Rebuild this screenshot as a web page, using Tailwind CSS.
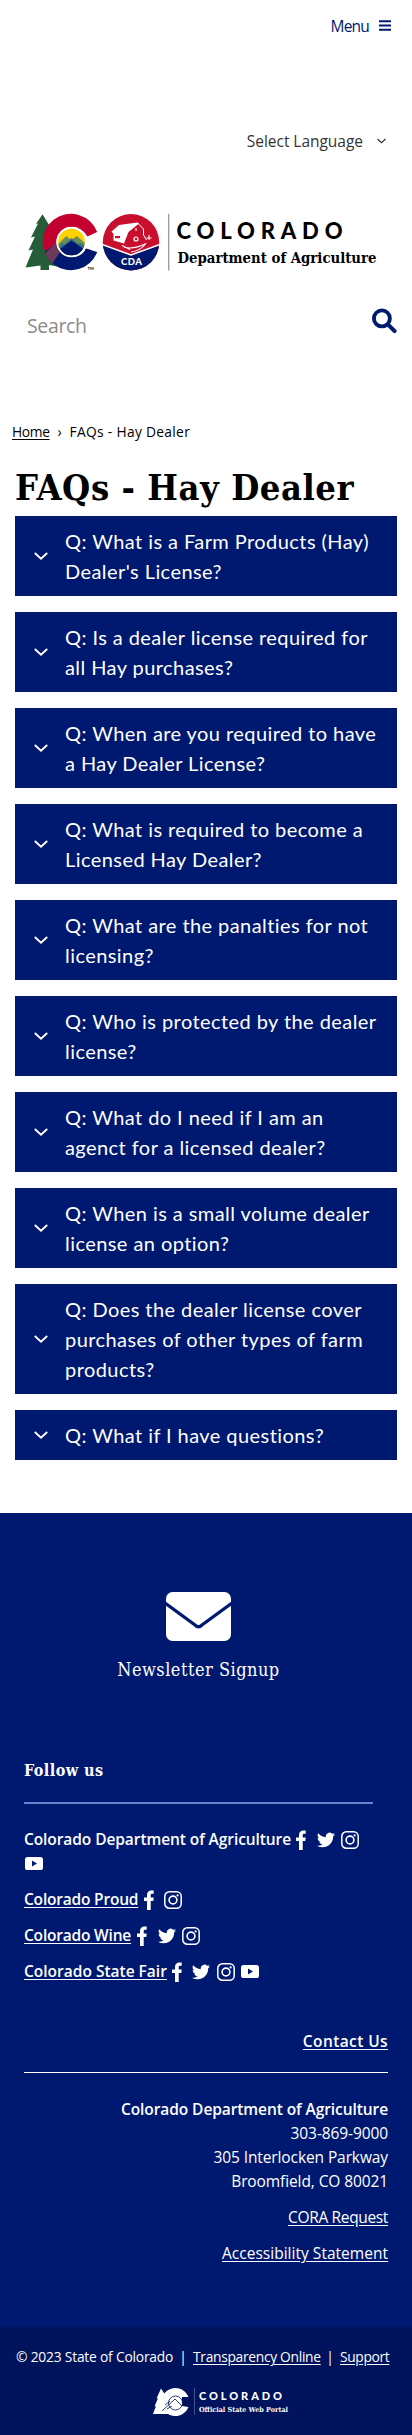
<!DOCTYPE html>
<html lang="en">
<head>
<meta charset="utf-8">
<title>FAQs - Hay Dealer</title>
<script src="https://cdn.jsdelivr.net/npm/@tailwindcss/browser@4"></script>
</head>
<body class="w-[412px] h-[2435px] bg-white text-black font-['Open_Sans',sans-serif] text-[15.5px] leading-6 overflow-x-hidden">

<svg class="hidden">
  <symbol id="chev" viewBox="0 0 14 8"><path d="M.8 1 7 6.6 13.2 1" fill="none" stroke="currentColor" stroke-width="1.9"/></symbol>
  <symbol id="fb" viewBox="0 0 18 20"><path d="M7 20v-9H4V7.400h3V5c0-3 1.800-4.600 4.400-4.600h2.300v3.400h-1.500c-1.200 0-1.500.6-1.500 1.500v2.100h3l-.4 3.600h-2.600v9z" fill="currentColor"/></symbol>
  <symbol id="tw" viewBox="0 0 24 24"><path fill="currentColor" d="M23.950 4.570a10 10 0 0 1-2.820.77 4.960 4.960 0 0 0 2.160-2.720c-.95.56-2 .96-3.120 1.190a4.920 4.920 0 0 0-8.380 4.480C7.690 8.090 4.070 6.130 1.640 3.160a4.920 4.920 0 0 0 1.520 6.570 4.900 4.900 0 0 1-2.230-.61v.06a4.920 4.920 0 0 0 3.950 4.830 4.900 4.900 0 0 1-2.210.08 4.940 4.940 0 0 0 4.600 3.420A9.870 9.870 0 0 1 0 19.540a13.990 13.990 0 0 0 7.550 2.210c9.050 0 14-7.500 14-13.980 0-.21 0-.42-.02-.63a9.940 9.940 0 0 0 2.420-2.570z"/></symbol>
  <symbol id="ig" viewBox="0 0 18 18"><rect x=".8" y=".8" width="16.400" height="16.400" rx="4.500" fill="none" stroke="currentColor" stroke-width="1.500"/><circle cx="9" cy="9" r="3.900" fill="none" stroke="currentColor" stroke-width="1.600"/><circle cx="13.600" cy="4.400" r="1.100" fill="currentColor"/></symbol>
  <symbol id="yt" viewBox="0 0 18 13"><rect width="18" height="13" rx="2.600" fill="currentColor"/><path d="M7 3.500v6l5-3z" fill="#001970"/></symbol>
</svg>

<header class="h-[400px]">
  <div class="flex items-center justify-end h-[51px] pr-[21px] gap-[10px] text-[#001970]">
    <span class="text-[15.500px] tracking-[-0.800px]">Menu</span>
    <svg class="w-3 h-[11px]" viewBox="0 0 12 11"><path d="M0 1.200h12M0 5.500h12M0 9.800h12" stroke="currentColor" stroke-width="1.900"/></svg>
  </div>
  <div class="flex items-center justify-end h-6 mt-[78px] pr-[26px] gap-[14px] text-[#333]">
    <span class="tracking-[-0.030px]">Select Language</span>
    <svg class="w-[9px] h-[6px]"><use href="#chev"/></svg>
  </div>

  <svg class="block ml-6 mt-[59px] w-[356px] h-[62px]" viewBox="24 212 356 62">
    <defs>
      <clipPath id="c"><path d="M97.200 232A28.200 28.200 0 1 0 97.200 252L86 248.500Q82 257 71.500 257A15 15 0 0 1 71.500 227Q82 227 87.500 236.500Z"/></clipPath>
      <clipPath id="disc"><circle cx="71.500" cy="242" r="13.300"/></clipPath>
      <clipPath id="cda"><circle cx="131" cy="242.300" r="28.200"/></clipPath>
    </defs>
    <path d="M42.500 214.300 51.500 229 47 230 54 243 50 244 60 267 49 265V270H40.500V265.500L25.500 267.500 33 249.500 28.500 250.500 35 236.500 31 237.500 38 223.500 36 224Z" fill="#245d38"/>
    <g clip-path="url(#c)">
      <path d="M40 210h62v40H40z" fill="#c3002f"/>
      <path d="M42 254 55 244 64 252 76 255 86 248.500 102 240V275H42z" fill="#001970"/>
      <path d="M42 256 55.500 243 60 252 52 264z" fill="#6d3a5d"/>
    </g>
    <circle cx="71.500" cy="242" r="15.200" fill="#fff"/>
    <g clip-path="url(#disc)">
      <path d="M56 227h32v30H56z" fill="#ffd100"/>
      <path d="M56 246 66.500 236 71 240 77 236 88 246V258H56z" fill="#6c8f58"/>
      <path d="M56 249 62 243 65 244 71.500 238 78 244 81 243 88 249V258H56z" fill="#3c6e80"/>
      <path d="M56 252 71.500 240.500 88 252V258H56z" fill="#001970"/>
    </g>
    <text x="87.500" y="270" font-family="Lato" font-size="4" font-weight="700">TM</text>
    <g clip-path="url(#cda)">
      <path d="M102 213h58v58h-58z" fill="#c8102e"/>
      <path d="M102 245 131 255.500 160 245V272H102z" fill="#001970"/>
      <path d="M102 244.500 131 255 160 244.500" fill="none" stroke="#fff" stroke-width="1.600"/>
    </g>
    <path d="M111.500 231.500 119 225 137.500 222.500 139 223.500 128.500 232 124 243.500 113.500 240.500V234Z" fill="#fff"/>
    <path d="M137.500 223 143.500 229V235L146.500 240M149 235v5M146.500 238h5M124.500 234 128 230" fill="none" stroke="#fff" stroke-width="1"/>
    <path d="M115 236h5v2.200h-5z" fill="#c8102e"/>
    <circle cx="136" cy="239" r="2" fill="none" stroke="#fff" stroke-width="1.200"/>
    <path d="M136 228v3M124 247Q133 250 146 243.500Q140 251 131 252M122 245.500 130 249.500" fill="none" stroke="#fff" stroke-width="1.100"/>
    <text x="121" y="264.500" font-family="Lato" font-size="9.500" font-weight="900" fill="#fff" textLength="21">CDA</text>
    <path d="M168.800 214v56.500" stroke="#777" stroke-width="1"/>
    <text x="176.500" y="238.500" font-family="Lato" font-size="22" font-weight="900" textLength="166">COLORADO</text>
    <text x="177.500" y="262.500" font-family="DejaVu Serif" style="font-stretch:75%" font-size="14.500" font-weight="700" textLength="199" lengthAdjust="spacingAndGlyphs">Department of Agriculture</text>
  </svg>

  <div class="flex justify-between mt-[34px] pl-[27px] pr-[15px]">
    <span class="mt-[3px] text-[19.500px] leading-[30px] text-[#8c8c8c] tracking-[-0.350px]">Search</span>
    <svg class="w-[25px] h-[26px]" viewBox="0 0 26 26"><circle cx="10.300" cy="10.300" r="8.300" fill="none" stroke="#001970" stroke-width="4"/><path d="M16.500 16.500 23.500 23.500" stroke="#001970" stroke-width="4.200" stroke-linecap="round"/></svg>
  </div>
</header>

<nav class="flex h-6 mt-[20px] pl-3 text-[13.800px]">
  <a class="underline underline-offset-2 tracking-[-0.350px]">Home</a><span class="w-[20px] text-center">›</span><span class="tracking-[0.300px]">FAQs - Hay Dealer</span>
</nav>

<main class="px-[15px]">
  <h1 class="mt-[21px] h-[51.400px] leading-[44px] font-bold text-[36px] tracking-[0.550px] whitespace-nowrap font-['DejaVu_Serif',serif] [font-stretch:75%]">FAQs - Hay Dealer</h1>
  <div id="faq" class="flex flex-col gap-4"></div>
</main>

<footer class="mt-[52.600px] bg-[#001970] text-white h-[922px] flex flex-col">
  <div class="flex flex-col items-center pr-[15px] pt-[79px]">
    <svg class="w-[65px] h-[49px]" viewBox="0 0 65 49"><rect width="65" height="49" rx="6.500" fill="#fff"/><path d="M-1 11 29 33Q32.500 36.500 36 33L66 11" fill="none" stroke="#001970" stroke-width="3.200"/></svg>
    <div class="mt-[14px] leading-[30px] text-[18px] tracking-[0.500px] font-['DejaVu_Serif',serif] [font-stretch:75%]">Newsletter Signup</div>
  </div>
  <div class="ml-6 mt-[72.700px] leading-[26px] font-bold text-[16px] tracking-[0.450px] font-['DejaVu_Serif',serif] [font-stretch:75%]">Follow us</div>
  <div class="ml-6 mt-[18px] w-[349px] h-[2px] bg-[#6a80cc]"></div>
  <div id="social" class="ml-6 mt-[23px] flex flex-col gap-3 font-semibold"></div>
  <div class="mx-6 mt-[46px] flex flex-col items-end">
    <a class="font-semibold underline underline-offset-2 tracking-[0.400px]">Contact Us</a>
    <div class="w-full h-px bg-white mt-[19px] mb-[24.500px]"></div>
    <div class="font-semibold tracking-[-0.080px]">Colorado Department of Agriculture</div>
    <div class="tracking-[-0.100px]">303-869-9000</div>
    <div class="tracking-[-0.100px]">305 Interlocken Parkway</div>
    <div class="tracking-[-0.100px]">Broomfield, CO 80021</div>
    <a class="mt-3 underline underline-offset-2 tracking-[-0.350px]">CORA Request</a>
    <a class="mt-3 underline underline-offset-2 tracking-[0.020px]">Accessibility Statement</a>
  </div>
  <div class="mt-auto h-[107.500px] bg-[#00135c]">
    <div class="flex pl-4 pt-[18px] text-[13.800px] whitespace-nowrap"><span class="w-[157px] tracking-[-0.200px]">© 2023 State of Colorado</span><span class="w-[20px] text-center">|</span><a class="w-[127px] underline underline-offset-2 tracking-[-0.300px]">Transparency Online</a><span class="w-[20px] text-center">|</span><a class="underline underline-offset-2 tracking-[-0.350px]">Support</a></div>
    <svg class="block ml-[152px] mt-[18px] w-[138px] h-[32px]" viewBox="152 2388 138 32">
      <path d="M161 2389.500 166 2397 163.500 2398 168 2406 170 2415H153L156 2407 154.500 2407.500 158 2399 156.500 2399.500Z" fill="#fff"/>
      <path d="M188.500 2398A14 14 0 1 0 188.500 2408L182 2407V2398Z" fill="#fff"/>
      <circle cx="175.500" cy="2404" r="7" fill="#fff" stroke="#00135c" stroke-width=".8"/>
      <path d="M162 2412 175 2400 182 2407M170 2402 165 2406M167 2410 172 2407M182 2401H189V2405H183" fill="none" stroke="#00135c" stroke-width=".8"/>
      <path d="M194.500 2389v27" stroke="#7680aa" stroke-width=".6"/>
      <text x="199" y="2401" font-family="Lato" font-size="11" font-weight="900" fill="#fff" textLength="83">COLORADO</text>
      <text x="199" y="2413" font-family="DejaVu Serif" style="font-stretch:75%" font-size="7" font-weight="700" fill="#fff" textLength="89" lengthAdjust="spacingAndGlyphs">Official State Web Portal</text>
    </svg>
  </div>
</footer>

<script>
const questions = [
  ["Q: What is a Farm Products (Hay)", "Dealer's License?"],
  ["Q: Is a dealer license required for", "all Hay purchases?"],
  ["Q: When are you required to have", "a Hay Dealer License?"],
  ["Q: What is required to become a", "Licensed Hay Dealer?"],
  ["Q: What are the panalties for not", "licensing?"],
  ["Q: Who is protected by the dealer", "license?"],
  ["Q: What do I need if I am an", "agenct for a licensed dealer?"],
  ["Q: When is a small volume dealer", "license an option?"],
  ["Q: Does the dealer license cover", "purchases of other types of farm", "products?"],
  ["Q: What if I have questions?"]
];
document.getElementById('faq').innerHTML = questions.map(lines => `
  <div class="flex items-center bg-[#001970] text-white py-[10px] pl-[19px]">
    <svg class="w-[14px] h-2 shrink-0"><use href="#chev"/></svg>
    <div class="ml-[17px] font-[Lato,sans-serif] text-[20px] leading-[30px] tracking-[0.430px] whitespace-nowrap">${lines.join('<br>')}</div>
  </div>`).join('');

const icon = {
  fb: '<svg class="w-[18px] h-5"><use href="#fb"/></svg>',
  tw: '<svg class="w-[18px] h-[18px]"><use href="#tw"/></svg>',
  ig: '<svg class="w-[18px] h-[18px]"><use href="#ig"/></svg>',
  yt: '<svg class="w-[18px] h-[13px]"><use href="#yt"/></svg>'
};
const cell = k => `<span class="w-[18px] h-[26px] flex items-center justify-center">${icon[k]}</span>`;
const accounts = [
  ["Colorado Department of Agriculture", 267, "tracking-[-0.080px]", ["fb", "tw", "ig"], ["yt"]],
  ["Colorado Proud", 114.5, "underline underline-offset-2 tracking-[-0.200px]", ["fb", "ig"]],
  ["Colorado Wine", 108, "underline underline-offset-2 tracking-[-0.200px]", ["fb", "tw", "ig"]],
  ["Colorado State Fair", 142.5, "underline underline-offset-2", ["fb", "tw", "ig", "yt"]]
];
document.getElementById('social').innerHTML = accounts.map(([n, w, c, a, b]) => `
  <div><div class="flex gap-[6.500px] h-6"><span class="whitespace-nowrap mr-[-5.500px]" style="width:${w}px"><a class="${c}">${n}</a></span>${a.map(cell).join('')}</div>
  ${b ? `<div class="flex pl-px h-6">${b.map(cell).join('')}</div>` : ''}</div>`).join('');
</script>
</body>
</html>
